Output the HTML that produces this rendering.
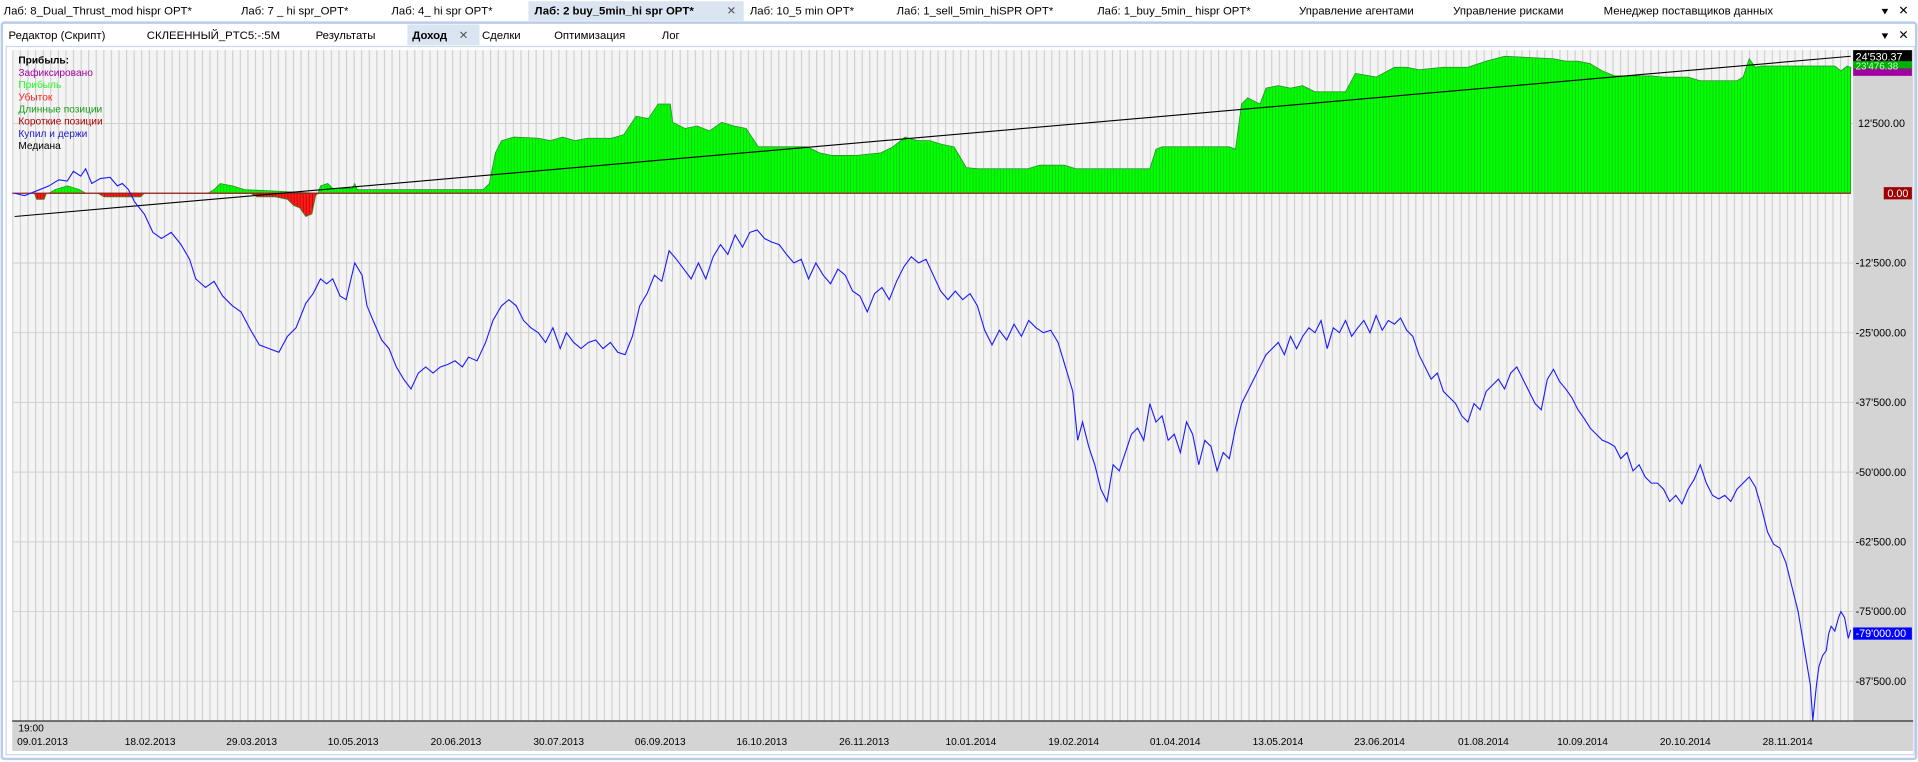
<!DOCTYPE html>
<html><head><meta charset="utf-8"><style>
html,body{margin:0;padding:0;background:#fff;}
svg{display:block;font-family:"Liberation Sans","DejaVu Sans",sans-serif;}
</style></head><body>
<svg width="1918" height="762" viewBox="0 0 1568 623" preserveAspectRatio="none" xmlns="http://www.w3.org/2000/svg">
<defs>
<pattern id="vg" x="10" y="0" width="6.2" height="10" patternUnits="userSpaceOnUse"><line x1="0.5" y1="0" x2="0.5" y2="10" stroke="#c8c8c8" stroke-width="0.8"/></pattern>
<pattern id="gb" x="0" y="0" width="2.5" height="10" patternUnits="userSpaceOnUse"><rect width="2.5" height="10" fill="#00ff00"/><line x1="0.4" y1="0" x2="0.4" y2="10" stroke="#1fb81f" stroke-width="0.5"/></pattern>
<pattern id="rb" x="0" y="0" width="2.5" height="10" patternUnits="userSpaceOnUse"><rect width="2.5" height="10" fill="#ff1a1a"/><line x1="0.4" y1="0" x2="0.4" y2="10" stroke="#a00000" stroke-width="0.5"/></pattern>
</defs>
<rect width="1568" height="623" fill="#fff"/>
<rect x="0" y="0" width="1568" height="17" fill="#fff"/>
<rect x="432" y="1" width="176" height="16" fill="#dbe5f1"/>
<g font-size="9.3" fill="#000">
<text x="3" y="12">Лаб: 8_Dual_Thrust_mod hispr OPT*</text>
<text x="197" y="12">Лаб: 7 _ hi spr_OPT*</text>
<text x="320" y="12">Лаб: 4_ hi spr OPT*</text>
<text x="437" y="12" font-weight="bold">Лаб: 2 buy_5min_hi spr OPT*</text>
<text x="594" y="12" fill="#555">✕</text>
<text x="613" y="12">Лаб: 10_5 min OPT*</text>
<text x="733" y="12">Лаб: 1_sell_5min_hiSPR OPT*</text>
<text x="897" y="12">Лаб: 1_buy_5min_ hispr OPT*</text>
<text x="1062" y="12">Управление агентами</text>
<text x="1188" y="12">Управление рисками</text>
<text x="1311" y="12">Менеджер поставщиков данных</text>
<text x="1537" y="13" font-size="10">⯆</text>
<text x="1552" y="12" font-size="10">✕</text>
</g>
<rect x="1.5" y="18.5" width="1565" height="602" fill="#fff" stroke="#b9cde8" stroke-width="2" rx="2"/>
<rect x="333" y="20" width="59" height="17" fill="#dbe5f1"/>
<g font-size="9.3" fill="#000">
<text x="7" y="32">Редактор (Скрипт)</text>
<text x="120" y="32">СКЛЕЕННЫЙ_PTC5:-:5M</text>
<text x="258" y="32">Результаты</text>
<text x="337" y="32" font-weight="bold">Доход</text>
<text x="375" y="32" fill="#555">✕</text>
<text x="394" y="32">Сделки</text>
<text x="453" y="32">Оптимизация</text>
<text x="541" y="32">Лог</text>
<text x="1537" y="33" font-size="10">⯆</text>
<text x="1552" y="32" font-size="10">✕</text>
</g>
<rect x="5" y="38" width="1560" height="579" fill="#fff" stroke="#c9d8ec" stroke-width="1"/>
<rect x="10" y="41" width="1505" height="548" fill="#f4f4f4"/>
<rect x="10" y="41" width="1505" height="548" fill="url(#vg)"/>
<g stroke="#d0d0d0" stroke-width="0.8">
<line x1="10" y1="101" x2="1515" y2="101"/><line x1="10" y1="215" x2="1515" y2="215"/>
<line x1="10" y1="272" x2="1515" y2="272"/><line x1="10" y1="329" x2="1515" y2="329"/>
<line x1="10" y1="386" x2="1515" y2="386"/><line x1="10" y1="443" x2="1515" y2="443"/>
<line x1="10" y1="500" x2="1515" y2="500"/><line x1="10" y1="557" x2="1515" y2="557"/>
</g>
<rect x="1515" y="41" width="49" height="573" fill="#d4d4d4"/>
<rect x="10" y="589" width="1554" height="25" fill="#d4d4d4"/>
<line x1="10" y1="589.5" x2="1564" y2="589.5" stroke="#000" stroke-width="0.8"/>
<polygon fill="url(#gb)" stroke="#2a8a2a" stroke-width="0.6" points="40,158 45,155 55,152 65,155 70,158 170,158 175,155 180,150 190,152 200,155 260,158 262,152 268,150 272,154 288,154 290,150 292,155 395,155 400,150 405,125 410,115 420,112 440,113 450,115 460,112 470,115 480,113 500,113 510,110 520,95 530,97 538,85 548,85 550,100 560,105 570,103 580,107 590,100 600,103 610,105 620,120 640,120 660,120 670,125 680,127 700,127 720,125 730,120 740,112 750,115 760,115 770,118 780,120 790,137 800,138 840,138 850,135 870,135 880,138 940,138 945,122 950,120 1005,120 1010,122 1015,85 1020,80 1030,85 1035,72 1045,70 1055,72 1065,70 1075,75 1090,75 1100,75 1108,60 1120,62 1125,63 1140,55 1150,55 1160,57 1180,55 1200,55 1215,50 1230,46 1250,47 1270,48 1280,50 1290,50 1300,52 1310,58 1320,62 1350,62 1360,63 1380,63 1390,66 1420,66 1425,63 1430,48 1435,55 1440,54 1500,54 1505,58 1510,54 1513,55 1513,158"/>
<polygon fill="url(#rb)" stroke="#2a8a2a" stroke-width="0.6" points="28,158 30,163 36,163 38,158 80,158 85,161 115,161 118,158 205,158 210,161 225,161 235,163 240,168 245,170 250,177 255,175 258,160 260,158"/>
<line x1="10" y1="158" x2="1513" y2="158" stroke="#a02020" stroke-width="1"/>
<line x1="12" y1="177" x2="1513" y2="46" stroke="#000" stroke-width="0.9"/>
<polyline fill="none" stroke="#1a1aff" stroke-width="0.9" points="12,158 20,160 30,156 40,152 48,147 55,148 60,140 66,144 70,138 75,150 82,146 90,145 96,152 100,150 105,155 110,165 118,175 125,190 132,195 140,190 148,200 155,212 160,228 168,235 175,230 182,242 190,250 197,255 205,270 212,282 220,285 228,288 235,275 242,268 250,248 256,240 262,228 267,232 272,228 278,242 283,245 290,215 296,225 300,250 305,262 312,278 318,285 324,300 330,310 336,318 342,305 348,300 354,305 360,300 366,298 372,295 378,300 383,292 390,295 397,280 403,262 410,250 416,245 422,250 428,262 434,268 440,272 446,280 452,268 458,285 463,272 469,280 475,285 481,280 487,278 493,285 499,280 505,288 511,290 517,275 523,250 529,240 535,225 541,230 547,205 553,212 559,220 565,228 571,215 577,228 583,210 589,200 595,208 601,192 607,202 613,190 619,188 625,195 631,198 637,200 643,208 649,215 655,212 661,228 667,215 673,225 679,232 685,220 691,225 697,238 703,242 709,255 715,240 721,235 727,245 733,230 739,218 745,210 751,215 757,212 763,225 769,238 775,245 781,238 787,245 793,240 799,250 805,270 811,282 817,270 823,278 829,265 835,275 841,262 847,268 853,272 859,270 865,280 871,300 877,320 881,360 885,345 890,365 895,380 900,400 905,410 910,380 915,385 920,370 925,355 930,350 935,360 940,330 945,345 950,340 955,360 960,355 965,370 970,345 975,355 980,380 985,360 990,365 995,385 1000,370 1005,375 1010,350 1015,330 1020,320 1025,310 1030,300 1035,290 1040,285 1045,280 1050,290 1055,275 1060,285 1065,275 1070,268 1075,272 1080,262 1085,285 1090,268 1095,272 1100,262 1105,275 1110,268 1115,262 1120,272 1125,258 1130,270 1135,262 1140,265 1145,260 1150,270 1155,275 1160,290 1165,300 1170,310 1175,305 1180,320 1185,325 1190,330 1195,340 1200,345 1205,330 1210,335 1215,320 1220,315 1225,310 1230,318 1235,305 1240,300 1245,310 1250,320 1255,330 1260,335 1265,310 1270,302 1275,312 1280,318 1285,325 1290,335 1295,342 1300,350 1305,355 1310,360 1315,362 1320,365 1325,375 1330,370 1335,385 1340,380 1345,390 1350,395 1355,395 1360,400 1365,410 1370,405 1375,412 1380,400 1385,392 1390,380 1395,395 1400,405 1405,408 1410,405 1415,410 1420,400 1425,395 1430,390 1435,398 1440,415 1445,435 1450,445 1455,448 1460,460 1465,480 1470,500 1475,530 1480,560 1482,589 1485,560 1487,545 1490,536 1493,532 1495,518 1497,512 1500,516 1503,505 1505,500 1508,505 1511,522 1513,515"/>
<g font-size="8.3">
<text x="15" y="52" font-weight="bold" fill="#000">Прибыль:</text>
<text x="15" y="62" fill="#a000a0">Зафиксировано</text>
<text x="15" y="72" fill="#22ff22">Прибыль</text>
<text x="15" y="82" fill="#ff2020">Убыток</text>
<text x="15" y="92" fill="#1a9a1a">Длинные позиции</text>
<text x="15" y="102" fill="#b00000">Короткие позиции</text>
<text x="15" y="112" fill="#2020d0">Купил и держи</text>
<text x="15" y="122" fill="#000">Медиана</text>
</g>
<g font-size="8.8">
<rect x="1515" y="53" width="48" height="9" fill="#a000a0"/>
<rect x="1515" y="48" width="48" height="8" fill="#00b000"/>
<rect x="1515" y="41" width="48" height="9" fill="#000"/>
<text x="1517" y="49.5" fill="#fff">24'530.37</text>
<text x="1517" y="57" fill="#c8ffc8" font-size="8">23'476.38</text>
<text x="1519" y="104" fill="#000">12'500.00</text>
<rect x="1540" y="153" width="23" height="10" fill="#a00000"/>
<text x="1543" y="161" fill="#fff">0.00</text>
<text x="1517" y="218" fill="#000">-12'500.00</text>
<text x="1517" y="275" fill="#000">-25'000.00</text>
<text x="1517" y="332" fill="#000">-37'500.00</text>
<text x="1517" y="389" fill="#000">-50'000.00</text>
<text x="1517" y="446" fill="#000">-62'500.00</text>
<text x="1517" y="503" fill="#000">-75'000.00</text>
<rect x="1515" y="513" width="48" height="10" fill="#0000ff"/>
<text x="1517" y="521" fill="#fff">-79'000.00</text>
<text x="1517" y="560" fill="#000">-87'500.00</text>
</g>
<g font-size="8.3" fill="#000">
<text x="15" y="598">19:00</text>
<text x="14" y="609">09.01.2013</text>
<text x="102" y="609">18.02.2013</text>
<text x="185" y="609">29.03.2013</text>
<text x="268" y="609">10.05.2013</text>
<text x="352" y="609">20.06.2013</text>
<text x="436" y="609">30.07.2013</text>
<text x="519" y="609">06.09.2013</text>
<text x="602" y="609">16.10.2013</text>
<text x="686" y="609">26.11.2013</text>
<text x="773" y="609">10.01.2014</text>
<text x="857" y="609">19.02.2014</text>
<text x="940" y="609">01.04.2014</text>
<text x="1024" y="609">13.05.2014</text>
<text x="1107" y="609">23.06.2014</text>
<text x="1192" y="609">01.08.2014</text>
<text x="1273" y="609">10.09.2014</text>
<text x="1357" y="609">20.10.2014</text>
<text x="1441" y="609">28.11.2014</text>
</g>
</svg>
</body></html>
